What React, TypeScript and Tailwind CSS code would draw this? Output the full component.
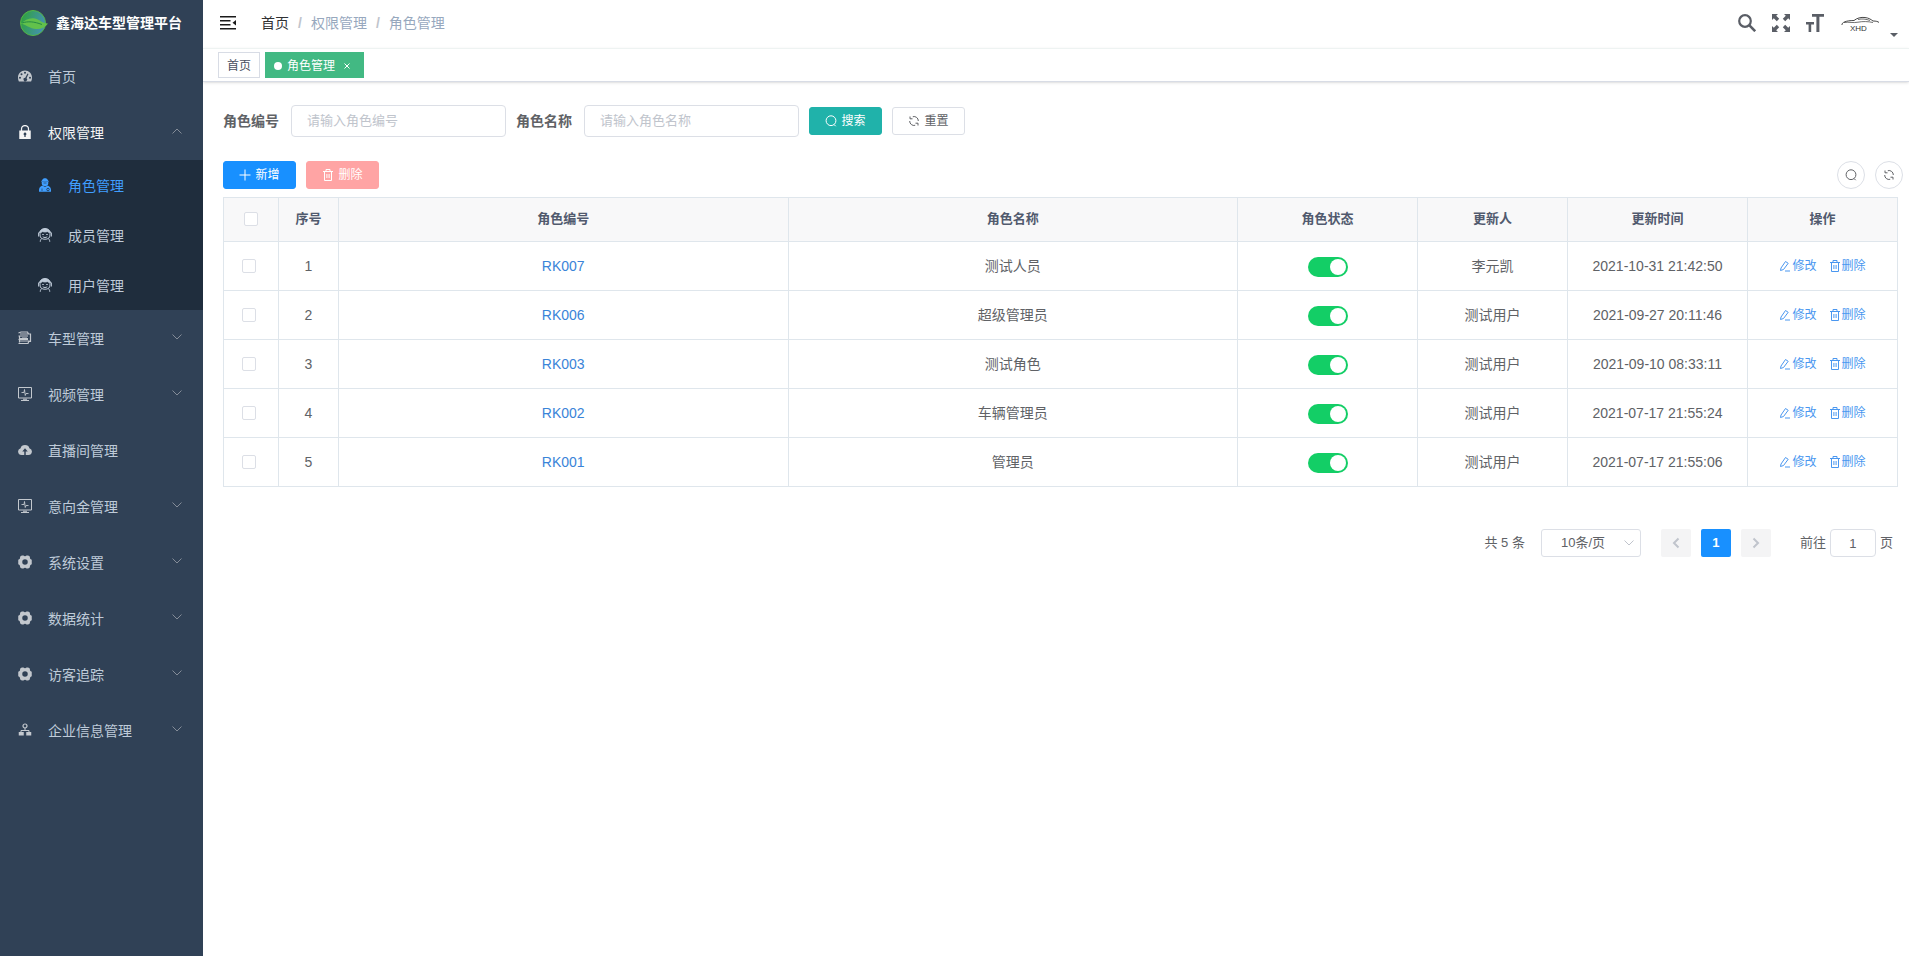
import React, { useState } from "react";

type IconProps = { className?: string };

const DashboardIcon: React.FC<IconProps> = ({ className }) => (
  <svg viewBox="0 0 28 28" className={className} fill="currentColor">
    <path
      fillRule="evenodd"
      d="M14 3C6.300 3 0 9.300 0 17c0 3 .6 5.800 1.800 8h24.400c1.200-2.200 1.800-5 1.800-8C28 9.300 21.700 3 14 3zM4 15.500a2 2 0 1 1 0 4 2 2 0 0 1 0-4zM7 8.500a2 2 0 1 1 0 4 2 2 0 0 1 0-4zM14 5.500a2 2 0 1 1 0 4 2 2 0 0 1 0-4zM24 15.500a2 2 0 1 1 0 4 2 2 0 0 1 0-4zM19 9l2 1-4 8.500a3.500 3.500 0 1 1-2.500-1z"
    />
  </svg>
);

const LockIcon: React.FC<IconProps> = ({ className }) => (
  <svg viewBox="0 0 28 28" className={className} fill="currentColor">
    <path d="M7 12V8a7 7 0 0 1 14 0v4" fill="none" stroke="currentColor" strokeWidth="2.500" />
    <path
      fillRule="evenodd"
      d="M2.500 11h23v17h-23zM14 15a3 3 0 0 0-1.300 5.600V24h2.600v-3.400A3 3 0 0 0 14 15z"
    />
  </svg>
);

const RoleIcon: React.FC<IconProps> = ({ className }) => (
  <svg viewBox="0 0 28 28" className={className} fill="currentColor">
    <path d="M9 3c1-2 3-2.500 5-2.500S18 1 19 3l3 4.500H6z" />
    <path d="M7.500 8h13v3c0 3.500-3 5.500-6.500 5.500S7.500 14.500 7.500 11z" />
    <path d="M8.500 15l5.500 3 5.500-3c5 2 6.500 5.500 6.500 9v3.500H2V24c0-3.500 1.500-7 6.500-9z" />
    <circle cx="20" cy="23" r="2.500" fill="none" stroke="#1f2d3d" strokeWidth="1.500" />
    <path d="M8 21v5M11 10h6" stroke="#1f2d3d" strokeWidth="1.200" />
  </svg>
);

const MemberIcon: React.FC<IconProps> = ({ className }) => (
  <svg viewBox="0 0 28 28" className={className} fill="none" stroke="currentColor" strokeWidth="2">
    <path d="M3 9C4.500 3.500 9 1 14 1s9.500 2.500 11 8c-3 0-5-.8-6-1.800-3 .8-7 .8-10 0C8 8.200 6 9 3 9z" fill="currentColor" />
    <path d="M4 8v6c0 6 4 8.500 10 8.500S24 20 24 14V8" />
    <path d="M1.200 9v8M26.800 9v8M7.500 21c-2 1.500-3 3.500-3 6.500M20.500 21c2 1.500 3 3.500 3 6.500" />
    <path d="M8.500 13h3M16.500 13h3M9.500 17.500c2.500 2 6.500 2 9 0" />
  </svg>
);

const CarListIcon: React.FC<IconProps> = ({ className }) => (
  <svg viewBox="0 0 28 28" className={className} fill="none" stroke="currentColor" strokeWidth="2.400">
    <path d="M1 4l5-2h13l2 4H4M1 10h19M3 10v5h17M1 17h19M3 17v6M1 25h19l2-5H4M21 6h4v15h-3M8 14h10" />
  </svg>
);

const MonitorIcon: React.FC<IconProps> = ({ className }) => (
  <svg viewBox="0 0 28 28" className={className} fill="none" stroke="currentColor" strokeWidth="2">
    <path d="M1 1h26v21H1zM6 27h16M10 24.500h8" />
    <path d="M7 11h5l1-6 1.500 12 1.500-4h5" strokeWidth="1.800" />
  </svg>
);

const CloudIcon: React.FC<IconProps> = ({ className }) => (
  <svg viewBox="0 0 28 28" className={className} fill="currentColor">
    <path
      fillRule="evenodd"
      d="M7 24a7 7 0 0 1-1.800-13.700C6 6.500 9.500 4 14 4s8 2.500 8.800 6.300A7 7 0 0 1 21 24h-5.500v-7h4L14 10.500 8.500 17h4v7z"
    />
  </svg>
);

const GearIcon: React.FC<IconProps> = ({ className }) => (
  <svg viewBox="0 0 28 28" className={className} fill="currentColor">
    <path
      fillRule="evenodd"
      d="M7.500 1h3.500c1.500 2 4.500 2 6 0h3.500L24 3.500c-.8 3 .5 5 3.500 6V18.500c-3 1-4.300 3-3.500 6L20.500 27H17c-1.500-2-4.500-2-6 0H7.500L4 24.500c.8-3-.5-5-3.500-6V9.500c3-1 4.300-3 3.500-6zM14 8.500a5.500 5.500 0 1 0 0 11 5.500 5.500 0 0 0 0-11z"
    />
  </svg>
);

const TreeIcon: React.FC<IconProps> = ({ className }) => (
  <svg viewBox="0 0 28 28" className={className} fill="currentColor">
    <circle cx="14" cy="6" r="4" fill="none" stroke="currentColor" strokeWidth="2.400" />
    <path d="M14 10v5M6 19v-4h16v4" fill="none" stroke="currentColor" strokeWidth="2" />
    <path d="M1.500 18h10v7h-10zM16.500 18h10v7h-10z" />
  </svg>
);

const Chevron: React.FC<IconProps> = ({ className }) => (
  <svg viewBox="0 0 12 12" className={className} fill="none" stroke="currentColor">
    <path d="M1.500 3.500L6 8l4.500-4.500" />
  </svg>
);

const SearchIcon: React.FC<IconProps> = ({ className }) => (
  <svg viewBox="0 0 12 12" className={className} fill="none" stroke="currentColor">
    <circle cx="6" cy="5.700" r="4.900" />
    <path d="M9 9.500l1.700 1.700" />
  </svg>
);

const RefreshIcon: React.FC<IconProps> = ({ className }) => (
  <svg viewBox="0 0 12 12" className={className} fill="none" stroke="currentColor">
    <path d="M2 1.500v2.300h2.500M4.800 1.700A4.300 4.300 0 0 1 10.300 6M10 10.500V8.200H7.500M7.200 10.300A4.300 4.300 0 0 1 1.700 6" />
  </svg>
);

const TrashIcon: React.FC<IconProps> = ({ className }) => (
  <svg viewBox="0 0 12 12" className={className} fill="none" stroke="currentColor">
    <path d="M1 2.500h10M4 2.500v-2h4v2M2.500 2.500v9h7v-9M4.900 5v4M7.100 5v4" />
  </svg>
);

const EditIcon: React.FC<IconProps> = ({ className }) => (
  <svg viewBox="0 0 12 12" className={className} fill="none" stroke="currentColor">
    <path d="M1.500 10.500L2 8l4.500-6.500 2.700 1.800L4.500 9.500zM6 11h5" />
  </svg>
);

const menus = [
  { name: "首页", icon: DashboardIcon, arrow: false },
  {
    name: "权限管理",
    icon: LockIcon,
    arrow: true,
    children: [
      { name: "角色管理", icon: RoleIcon },
      { name: "成员管理", icon: MemberIcon },
      { name: "用户管理", icon: MemberIcon },
    ],
  },
  { name: "车型管理", icon: CarListIcon, arrow: true },
  { name: "视频管理", icon: MonitorIcon, arrow: true },
  { name: "直播间管理", icon: CloudIcon, arrow: false },
  { name: "意向金管理", icon: MonitorIcon, arrow: true },
  { name: "系统设置", icon: GearIcon, arrow: true },
  { name: "数据统计", icon: GearIcon, arrow: true },
  { name: "访客追踪", icon: GearIcon, arrow: true },
  { name: "企业信息管理", icon: TreeIcon, arrow: true },
];

const roles = [
  { code: "RK007", name: "测试人员", user: "李元凯", time: "2021-10-31 21:42:50" },
  { code: "RK006", name: "超级管理员", user: "测试用户", time: "2021-09-27 20:11:46" },
  { code: "RK003", name: "测试角色", user: "测试用户", time: "2021-09-10 08:33:11" },
  { code: "RK002", name: "车辆管理员", user: "测试用户", time: "2021-07-17 21:55:24" },
  { code: "RK001", name: "管理员", user: "测试用户", time: "2021-07-17 21:55:06" },
];

const checkbox =
  "block size-[14px] appearance-none rounded-xs border border-[#dcdfe6] bg-white checked:border-[#1890ff] checked:bg-[#1890ff]";
const th = "h-11 border-r border-b border-[#dfe6ec] bg-[#f8f8f9] text-[13px] font-bold text-[#515a6e]";
const td = "h-[49px] border-r border-b border-[#dfe6ec] text-center";
const smallButton = "flex h-7 w-[73px] items-center justify-center gap-1 rounded-[3px] border text-xs";
const roundButton =
  "flex size-7 items-center justify-center rounded-full border border-[#dcdfe6] bg-white text-[#606266]";
const textInput =
  "h-8 w-[215px] rounded border border-[#dcdfe6] px-[15px] pb-[2px] text-[13px] outline-none placeholder:text-[#c0c4cc]";

const Sidebar: React.FC = () => {
  const [open, setOpen] = useState<string | null>("权限管理");

  return (
    <aside className="w-[203px] shrink-0 bg-[#304156] text-sm text-[#bfcbd9]">
      <a href="#" className="flex h-12 items-center pb-[2px] pl-5 font-bold text-white">
        <svg viewBox="0 0 28 26" className="mr-2 h-[26px] w-7">
          <defs>
            <linearGradient id="logo" x1="0" x2="1" y1="0.3" y2="0.6">
              <stop offset="0" stopColor="#2fa23c" />
              <stop offset="1" stopColor="#4590b8" />
            </linearGradient>
          </defs>
          <circle cx="13" cy="13" r="12.500" fill="url(#logo)" stroke="#55b546" />
          <path d="M1 13.500C5 10 9 7.500 15 8.500c5 1 7 5 13 5-3 4-7 6-12 5.500-6-.6-9-3.500-15-5.500z" fill="#62c14b" />
          <path d="M2 13c6-2 12-1.500 20 1.500" fill="none" stroke="#258b45" />
        </svg>
        鑫海达车型管理平台
      </a>
      <nav>
        {menus.map((menu) => {
          const isOpen = open === menu.name;
          return (
            <div key={menu.name}>
              <button
                className={`flex h-14 w-full items-center pr-5 pl-[18px] ${
                  menu.children ? "text-[#f4f4f5]" : ""
                }`}
                onClick={() => setOpen(isOpen ? null : menu.name)}
              >
                <menu.icon className={`mr-4 size-[14px] ${menu.children ? "" : "text-[#c3c8ce]"}`} />
                <span className="pt-[2px]">{menu.name}</span>
                {menu.arrow && (
                  <Chevron
                    className={`mb-[2px] ml-auto size-3 text-[#848c98] ${isOpen ? "rotate-180" : ""}`}
                  />
                )}
              </button>
              {menu.children && isOpen && (
                <div className="bg-[#1f2d3d]">
                  {menu.children.map((child, index) => (
                    <a
                      key={child.name}
                      href="#"
                      className={`flex h-[50px] items-center pl-[38px] ${
                        index === 0 ? "text-[#409eff]" : ""
                      }`}
                    >
                      <child.icon className="mr-4 size-[14px]" />
                      <span className="pt-[2px]">{child.name}</span>
                    </a>
                  ))}
                </div>
              )}
            </div>
          );
        })}
      </nav>
    </aside>
  );
};

const Navbar: React.FC = () => (
  <header className="flex h-12 items-center pr-[11px] pb-[2px] pl-[17px] text-sm">
    <button aria-label="收起菜单" className="mr-[25px]">
      <svg viewBox="0 0 16 16" className="size-4 text-[#1a1a1a]" fill="currentColor">
        <path d="M0 1h16v1.500H0zM0 5h10.500v1.500H0zM0 9h10.500v1.500H0zM0 13h16v1.500H0zM16 5v5.500l-3.500-2.750z" />
      </svg>
    </button>
    <nav className="flex items-center gap-[9px] text-[#97a8be]">
      <a href="#" className="text-[#303133]">
        首页
      </a>
      <span className="font-bold text-[#c0c4cc]">/</span>
      <span>权限管理</span>
      <span className="font-bold text-[#c0c4cc]">/</span>
      <span>角色管理</span>
    </nav>
    <div className="ml-auto flex items-center gap-4 text-[#5a5e66]">
      <button aria-label="搜索">
        <svg viewBox="0 0 18 18" className="size-[18px]" fill="none" stroke="currentColor" strokeWidth="2.200">
          <circle cx="7" cy="7" r="5.800" />
          <path d="M11.200 11.200l6 6" strokeWidth="2.600" />
        </svg>
      </button>
      <button aria-label="全屏">
        <svg viewBox="0 0 18 18" className="size-[18px]" fill="currentColor">
          <path d="M0 0h6L4.200 1.800l3 3-2.400 2.400-3-3L0 6zM18 0v6l-1.800-1.800-3 3-2.400-2.400 3-3L12 0zM0 18v-6l1.800 1.800 3-3 2.400 2.400-3 3L6 18zM18 18h-6l1.800-1.800-3-3 2.400-2.400 3 3L18 12z" />
        </svg>
      </button>
      <button aria-label="字体大小">
        <svg viewBox="0 0 18 18" className="size-[18px]" fill="currentColor">
          <path d="M6 0h12v2.800h-4.600V18h-3V2.800H6zM0 8h8v2.400H5.200V18H2.600v-7.600H0z" />
        </svg>
      </button>
      <button aria-label="用户" className="flex items-end">
        <svg viewBox="0 0 40 20" className="h-5 w-10" fill="none" stroke="#333">
          <path d="M2 12c-.5-2.500 4-4.500 12-4.500C17 5 21 4 25 4.500c4 .5 6 2 8 3.500 3 0 5 .5 6 1.500" strokeWidth="0.900" />
          <path d="M4 9.500c5-.8 9 .7 14-.3s10-.8 15 .3M18 6.500c4-1 8-.5 12 1" strokeWidth="0.700" />
          <text x="10" y="17.500" fontSize="8" fill="#333" stroke="none" className="font-['Liberation_Sans',sans-serif]">
            XHD
          </text>
        </svg>
        <svg viewBox="0 0 8 4" className="-mb-1 ml-[10px] h-1 w-2" fill="#5a5e66">
          <path d="M0 0h8L4 4z" />
        </svg>
      </button>
    </div>
  </header>
);

const Tags: React.FC = () => (
  <div className="flex h-[34px] gap-[5px] border-t border-b border-t-[#eef3f2] border-b-[#d8dce5] px-[15px] pt-[3px] text-xs shadow-sm">
    <a href="#" className="flex h-[26px] items-center border border-[#d8dce5] px-2 pt-px text-[#495060]">
      首页
    </a>
    <a href="#" className="flex h-[26px] items-center bg-[#42b983] pt-px pr-[14px] pl-[9px] text-white">
      <span className="mr-[5px] size-2 rounded-full bg-white" />
      角色管理
      <svg viewBox="0 0 6 6" className="ml-[9px] size-[6px]" fill="none" stroke="currentColor">
        <path d="M.5 .5l5 5M5.500 .5l-5 5" />
      </svg>
    </a>
  </div>
);

const RoleTable: React.FC = () => (
  <table className="mt-2 w-full table-fixed border-separate border-spacing-0 border-t border-l border-[#dfe6ec]">
    <colgroup>
      <col className="w-[55px]" />
      <col className="w-[60px]" />
      <col />
      <col />
      <col className="w-[180px]" />
      <col className="w-[150px]" />
      <col className="w-[180px]" />
      <col className="w-[150px]" />
    </colgroup>
    <thead>
      <tr>
        <th className={`${th} pb-[2px]`}>
          <input type="checkbox" aria-label="全选" className={`${checkbox} mx-auto`} />
        </th>
        <th className={th}>序号</th>
        <th className={th}>角色编号</th>
        <th className={th}>角色名称</th>
        <th className={th}>角色状态</th>
        <th className={th}>更新人</th>
        <th className={th}>更新时间</th>
        <th className={th}>操作</th>
      </tr>
    </thead>
    <tbody>
      {roles.map((role, index) => (
        <tr key={role.code}>
          <td className={`${td} pr-1`}>
            <input type="checkbox" aria-label={role.code} className={`${checkbox} mx-auto`} />
          </td>
          <td className={td}>{index + 1}</td>
          <td className={td}>
            <a href="#" className="text-[#3a84d8]">
              {role.code}
            </a>
          </td>
          <td className={td}>{role.name}</td>
          <td className={`${td} pt-[2px]`}>
            <input
              type="checkbox"
              role="switch"
              defaultChecked
              aria-label="角色状态"
              className="mx-auto flex h-5 w-10 appearance-none items-center rounded-full bg-[#dcdfe6] px-[2px] before:size-4 before:rounded-full before:bg-white checked:justify-end checked:bg-[#13ce66]"
            />
          </td>
          <td className={td}>{role.user}</td>
          <td className={td}>{role.time}</td>
          <td className={td}>
            <div className="flex justify-center gap-3 text-xs text-[#4a97f0]">
              <button className="flex items-center gap-px">
                <EditIcon className="size-3" />
                修改
              </button>
              <button className="flex items-center gap-px">
                <TrashIcon className="size-3" />
                删除
              </button>
            </div>
          </td>
        </tr>
      ))}
    </tbody>
  </table>
);

const Pagination: React.FC = () => (
  <div className="mt-[42px] flex h-7 items-center justify-end pr-[5px] text-[13px]">
    <span className="mr-4">共 5 条</span>
    <div className="mr-5 grid w-[100px] items-center">
      <select
        aria-label="每页条数"
        className="col-start-1 row-start-1 h-7 appearance-none rounded-[3px] border border-[#dcdfe6] bg-white pl-[19px] outline-none"
      >
        <option>10条/页</option>
        <option>20条/页</option>
        <option>50条/页</option>
      </select>
      <Chevron className="pointer-events-none col-start-1 row-start-1 mr-[6px] size-3 justify-self-end text-[#c0c4cc]" />
    </div>
    <div className="mr-[29px] flex gap-[10px]">
      <button aria-label="上一页" className="flex h-7 w-[30px] items-center justify-center rounded-xs bg-[#f4f4f5]">
        <Chevron className="size-3 rotate-90 stroke-2 text-[#c0c4cc]" />
      </button>
      <button className="h-7 w-[30px] rounded-xs bg-[#1890ff] font-bold text-white">1</button>
      <button aria-label="下一页" className="flex h-7 w-[30px] items-center justify-center rounded-xs bg-[#f4f4f5]">
        <Chevron className="size-3 -rotate-90 stroke-2 text-[#c0c4cc]" />
      </button>
    </div>
    <label className="flex items-center gap-1">
      前往
      <input
        defaultValue="1"
        className="h-7 w-[46px] rounded border border-[#dcdfe6] text-center outline-none"
      />
      页
    </label>
  </div>
);

const App: React.FC = () => {
  return (
    <div className="flex min-h-screen bg-white font-['Liberation_Sans','Noto_Sans_CJK_SC',sans-serif] text-sm text-[#606266]">
      <Sidebar />
      <div className="min-w-0 flex-1">
        <Navbar />
        <Tags />
        <main className="pt-[23px] pr-[11px] pl-5">
          <form className="flex items-center gap-[10px]">
            <label className="flex items-center gap-3 font-bold">
              角色编号
              <input className={`${textInput} font-normal`} placeholder="请输入角色编号" />
            </label>
            <label className="flex items-center gap-3 font-bold">
              角色名称
              <input className={`${textInput} font-normal`} placeholder="请输入角色名称" />
            </label>
            <button type="button" className={`${smallButton} border-[#20b2aa] bg-[#20b2aa] text-white`}>
              <SearchIcon className="size-3" />
              搜索
            </button>
            <button type="reset" className={`${smallButton} border-[#dcdfe6] bg-white`}>
              <RefreshIcon className="size-3" />
              重置
            </button>
          </form>
          <div className="mt-6 -mr-[5px] flex gap-[10px]">
            <button className={`${smallButton} border-[#1890ff] bg-[#1890ff] text-white`}>
              <svg viewBox="0 0 12 12" className="size-3" fill="none" stroke="currentColor">
                <path d="M6 .5v11M.5 6h11" />
              </svg>
              新增
            </button>
            <button className={`${smallButton} border-[#ffa4a4] bg-[#ffa4a4] text-white`}>
              <TrashIcon className="size-3" />
              删除
            </button>
            <button aria-label="隐藏搜索" className={`${roundButton} ml-auto`}>
              <SearchIcon className="size-3" />
            </button>
            <button aria-label="刷新" className={roundButton}>
              <RefreshIcon className="size-3" />
            </button>
          </div>
          <RoleTable />
          <Pagination />
        </main>
      </div>
    </div>
  );
};

export default App;
